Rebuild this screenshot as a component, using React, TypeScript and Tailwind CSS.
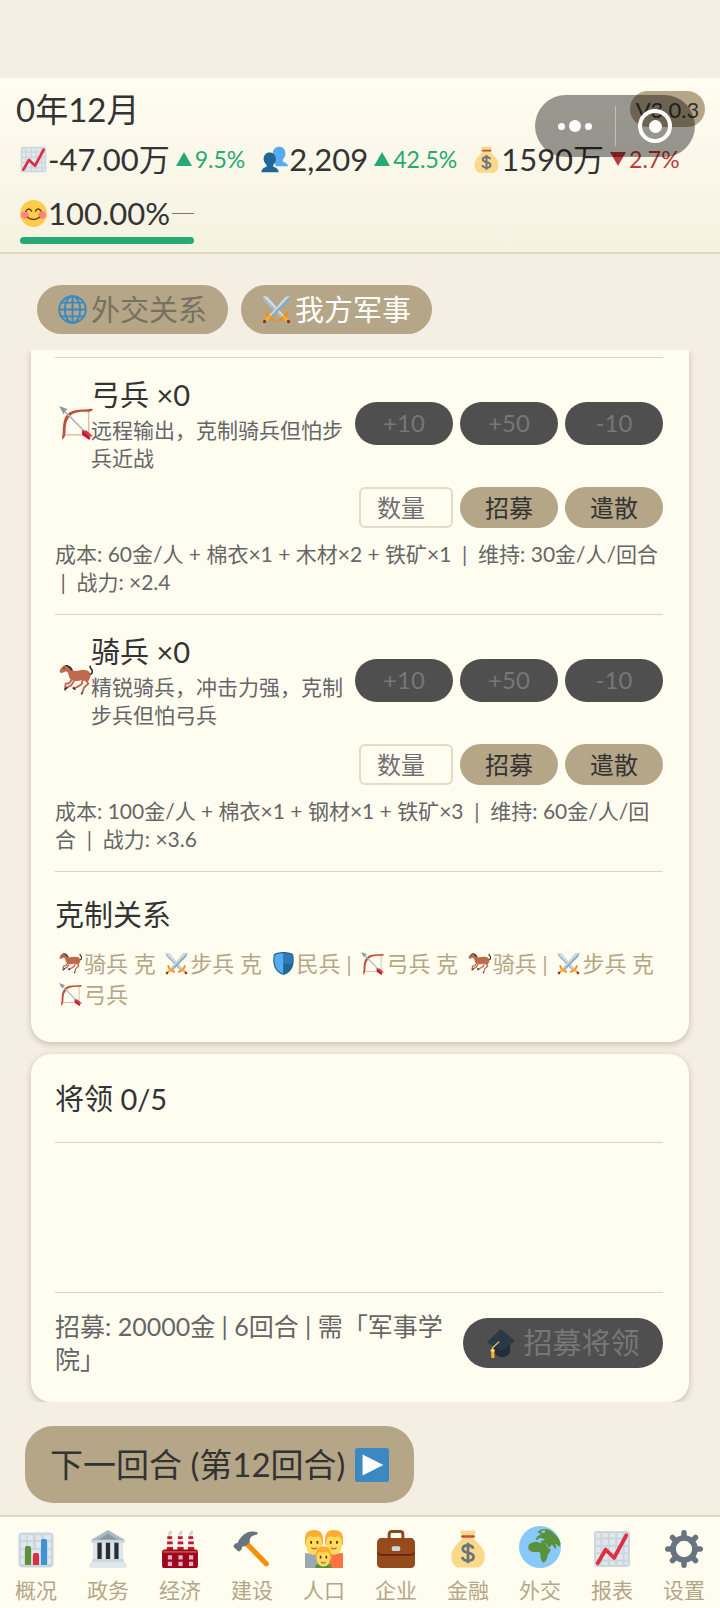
import type { ReactNode } from 'react'

interface IconProps {
  className?: string
}

function Svg({ className = '', children }: { className?: string; children: ReactNode }) {
  return (
    <svg viewBox="0 0 36 36" className={`shrink-0 ${className}`} aria-hidden="true">
      {children}
    </svg>
  )
}

function ChartUp({ className }: IconProps) {
  return (
    <Svg className={className}>
      <rect x="1" y="1" width="34" height="34" rx="3" fill="#ccd6dd" />
      <path
        fill="#e1e8ed"
        d="M3 3h4v4H3zM9 3h5v4H9zM16 3h5v4h-5zM23 3h5v4h-5zM30 3h3v4h-3zM3 9h4v5H3zM9 9h5v5H9zM16 9h5v5h-5zM23 9h5v5h-5zM30 9h3v5h-3zM3 16h4v5H3zM9 16h5v5H9zM16 16h5v5h-5zM23 16h5v5h-5zM30 16h3v5h-3zM3 23h4v5H3zM9 23h5v5H9zM16 23h5v5h-5zM23 23h5v5h-5zM30 23h3v5h-3zM3 30h4v3H3zM9 30h5v3H9zM16 30h5v3h-5zM23 30h5v3h-5zM30 30h3v3h-3z"
      />
      <path
        fill="none"
        stroke="#dd2e44"
        strokeWidth="3.6"
        strokeLinecap="round"
        strokeLinejoin="round"
        d="M4.500 31.500 12 18.500l8 8L31.500 5"
      />
    </Svg>
  )
}

function BarChart({ className }: IconProps) {
  return (
    <Svg className={className}>
      <rect x="0.500" y="0.500" width="35" height="35" rx="4" fill="#ccd6dd" />
      <path
        fill="#e1e8ed"
        d="M3 3h5v5H3zM10 3h5v5h-5zM18 3h5v5h-5zM26 3h7v5h-7zM3 10h5v6H3zM10 10h5v6h-5zM18 10h5v6h-5zM30 10h3v6h-3zM3 18h3v6H3zM14 18h8v6h-8zM30 18h3v6h-3zM3 26h3v6H3zM30 26h3v6h-3z"
      />
      <path fill="#5c913b" d="M7 15.500a1.500 1.500 0 0 1 1.500-1.500h3a1.500 1.500 0 0 1 1.500 1.500V33H7z" />
      <path fill="#dd2e44" d="M15 22.500a1.500 1.500 0 0 1 1.500-1.500h3a1.500 1.500 0 0 1 1.500 1.500V33h-6z" />
      <path fill="#3b94d9" d="M23 8.500A1.500 1.500 0 0 1 24.500 7h3A1.500 1.500 0 0 1 29 8.500V33h-6z" />
    </Svg>
  )
}

function People({ className }: IconProps) {
  return (
    <Svg className={className}>
      <path
        fill="#55acee"
        d="M24.500 1c4.600 0 8 3.600 8 8.500 0 3.500-1.300 6.500-3.500 8.500v3c3.500.8 6.500 2.500 7 6H20l-4-11c0-1.500-.3-4-.3-6C15.700 4.600 19.500 1 24.500 1z"
      />
      <path
        fill="#226699"
        d="M11.500 8.500c4.700 0 8.300 3.500 8.300 8.500 0 3.600-1.300 6.500-3.600 8.400v2.200c3.800.9 7 2.700 7.300 7.400H.5c.3-4.700 3.300-6.500 7-7.400v-2.200C5.200 23.500 3.500 20.500 3.500 17c0-5 3.400-8.500 8-8.500z"
      />
    </Svg>
  )
}

function MoneyBag({ className }: IconProps) {
  return (
    <Svg className={className}>
      <path fill="#fdd888" d="M11 1.500C11 .5 12 0 13 .5c2 .8 3 0 5 0s3 .8 5 0c1-.5 2 0 2 1 0 2-1 3.500-2 5.500H13c-1-2-2-3.500-2-5.500z" />
      <path
        fill="#fdd888"
        d="M13 7h10c1 3 7 6.500 9.500 12 2.800 6 1.500 13-4 16.500H7.500C2 32 .7 25 3.500 19 6 13.500 12 10 13 7z"
      />
      <rect x="11.500" y="5" width="13" height="2.400" rx="1.200" fill="#be4f3b" />
      <path
        fill="none"
        stroke="#67757f"
        strokeWidth="2.600"
        d="M23 17.600c-.6-2-2.500-3.100-5-3.100-2.800 0-5 1.300-5 3.600 0 5 10.300 2.200 10.300 7.200 0 2.400-2.300 3.700-5.300 3.700-2.800 0-5-1.200-5.500-3.500M18 12v19.500"
      />
    </Svg>
  )
}

function Smile({ className }: IconProps) {
  return (
    <Svg className={className}>
      <circle cx="18" cy="18" r="18" fill="#ffcc4d" />
      <circle cx="6.500" cy="20" r="5" fill="#ff7892" opacity="0.900" />
      <circle cx="29.500" cy="20" r="5" fill="#ff7892" opacity="0.900" />
      <path
        fill="none"
        stroke="#664500"
        strokeWidth="1.800"
        strokeLinecap="round"
        d="M8 15c1.500-4 6-4 7.500 0M20.500 15c1.500-4 6-4 7.500 0M10 23c4 4 12 4 16 0"
      />
    </Svg>
  )
}

function Globe({ className }: IconProps) {
  return (
    <Svg className={className}>
      <g fill="none" stroke="#3b88c3" strokeWidth="2.400">
        <circle cx="18" cy="18" r="16.500" />
        <ellipse cx="18" cy="18" rx="9.500" ry="16.500" />
        <path d="M18 1.500v33M1.500 18h33M4.500 9.500h27M4.500 26.500h27" />
      </g>
    </Svg>
  )
}

function Swords({ className }: IconProps) {
  return (
    <Svg className={className}>
      <path fill="#a9bdc9" d="M1 1l6 1.500L27 25l-3.500 3.500L2.500 7z" />
      <path fill="#d3dfe6" d="M1 1l6 1.500L27 25l-1.500 1.500z" />
      <path fill="#8ca9bb" d="M35 1l-6 1.500L9 25l3.500 3.500L33.500 7z" />
      <path fill="#ccd9e1" d="M35 1l-6 1.500L9 25l1.500 1.500z" />
      <g strokeLinecap="round" fill="none">
        <path stroke="#f4900c" strokeWidth="3" d="M5 22c1.500 4 5 7.500 9.500 9M31 22c-1.500 4-5 7.500-9.500 9" />
        <path stroke="#ffac33" strokeWidth="3.400" d="M9 27l-5 5M27 27l5 5" />
        <path stroke="#992b1f" strokeWidth="3.800" d="M3 33l.3-.3M33 33l-.3-.3" />
      </g>
    </Svg>
  )
}

function Bow({ className }: IconProps) {
  return (
    <Svg className={className}>
      <path fill="none" stroke="#dcb49a" strokeWidth="1.300" d="M4 30.500h27.500V4.500" />
      <path
        fill="#be4f3b"
        d="M3.500 35.500c-.7-2 .4-4 .5-8C4.200 17 5.500 12.500 9 8.500 13 4.500 19 3.600 28 3.600c4 0 5-.8 7.500-.6.3 1.800-.5 2.700-3.500 3-3 .2-5-.1-8 .1-5.500.4-9.300 1.400-12 4.300-3.500 3.600-4.800 8.600-5 13.600-.2 4 .3 9-3.500 11.500z"
      />
      <path stroke="#aab8c2" strokeWidth="1.800" d="M4 3.500 31 31" />
      <path fill="#8899a6" d="M0 0l9.500 3.500-3 1.500-1.500 4z" />
      <path fill="#dd2e44" d="M24 26h5l7 6-4 .5zM25 26v5l7 5 .5-3.500z" />
      <path fill="#be1931" d="M24.500 25.500l9 8.500-1 1.500-8-5z" />
    </Svg>
  )
}

function Horse({ className }: IconProps) {
  return (
    <Svg className={className}>
      <path
        fill="none"
        stroke="#292f33"
        strokeWidth="1.800"
        strokeLinecap="round"
        d="M32.500 12c3 0 3.500-3.500 2-5.500-1-1-1.800-1.500-1.500-3"
      />
      <g fill="none" stroke="#c1694f" strokeWidth="2" strokeLinejoin="round">
        <path d="M14 17l-3.500 4.500-3.500.5L6.500 27" />
        <path d="M16 19l-3.500 5-3.500 1.500" />
        <path d="M28 17l3 5-4.500 4-2 5.500" />
        <path d="M25 18l-1 4.500-5 3-3.500 1" />
      </g>
      <path
        fill="none"
        stroke="#292f33"
        strokeWidth="1.800"
        strokeLinecap="round"
        d="M6.500 27.500v.8M8.500 26l-.5.800M24.500 32l-.5.500M15 26.500l1.800 1.200"
      />
      <path
        fill="#c1694f"
        d="M.8 8.500C2 5.500 4 2.500 7 2.500c3.500 0 5 3.500 7.500 5.500 3.500 1 7.500-.5 11.500-.5 4.500 0 7 2 7.500 5 0 3-1.500 6-3.500 7.500l-5.500-2c-3.500 1.200-7 1.700-10 .5-4-1.500-4-5-5-8C8.500 9 7.500 8.800 6 9.200L3 10.500C1.500 10.800.5 9.500.8 8.500z"
      />
      <path fill="#292f33" d="M5.500 2.500C9 .8 13.500 3.500 15 8h-2C11 5.500 9 3.300 5.500 2.500z" />
      <circle cx="5.400" cy="5.500" r="0.700" fill="#292f33" />
    </Svg>
  )
}

function Shield({ className }: IconProps) {
  return (
    <Svg className={className}>
      <path fill="#226699" d="M33 3c-7-3-15-3-15-3S10 0 3 3C0 18 3 31 18 36 33 31 36 18 33 3z" />
      <path fill="#55acee" d="M18 2S10.500 2 4.500 4.500C2.500 18 5 29 18 34z" />
      <path fill="#2e7bb5" d="M18 2s7.500 0 13.500 2.500C33.500 18 31 29 18 34z" />
      <path fill="#226699" d="M18 18h14c-1 8-5 13.500-14 16z" />
    </Svg>
  )
}

function GradCap({ className }: IconProps) {
  return (
    <Svg className={className}>
      <path fill="#222e38" d="M9 19l11 7 10-9v12c-2 4-7 7-11 6-4-.8-8-3.500-10-7z" />
      <path fill="#2a3947" d="M1 16.500 17.500 1c.6-.5 1.500-.5 2 0L36 14.500 19.500 27.500z" />
      <path fill="none" stroke="#ffcc4d" strokeWidth="1.500" strokeLinecap="round" d="M16 16l-7.500 7v3" />
      <circle cx="8.300" cy="27" r="2.600" fill="#ffd983" />
      <path fill="#ffac33" d="M6.500 28h4v8h-4z" />
    </Svg>
  )
}

function Play({ className }: IconProps) {
  return (
    <Svg className={className}>
      <rect width="36" height="36" rx="3" fill="#3b88c3" />
      <path fill="#fff" d="M8 7l22 11L8 29z" />
    </Svg>
  )
}

function Bank({ className }: IconProps) {
  return (
    <Svg className={className}>
      <path fill="#292f33" d="M6 11h24v18H6z" />
      <path fill="#ccd6dd" d="M4 10h4v19H4zM12 10h4v19h-4zM20 10h4v19h-4zM28 10h4v19h-4z" />
      <path fill="#e1e8ed" d="M4.500 10h3v19h-3zM12.800 10h2.500v19h-2.500zM20.800 10h2.500v19h-2.500zM28.500 10h3v19h-3z" />
      <path fill="#aab8c2" d="M18 0l16 9.500V11H2V9.500z" />
      <path fill="#8899a6" d="M18 3.500 27 9H9z" />
      <path fill="#ccd6dd" d="M2 9.500h32V12H2zM3 27.500h30V31H3z" />
      <path fill="#e1e8ed" d="M0 33.500C0 32 1 30.500 3 30.500h30c2 0 3 1.500 3 3 0 1.600-1 2.500-2 2.500H2c-1 0-2-.9-2-2.500z" />
    </Svg>
  )
}

function Factory({ className }: IconProps) {
  return (
    <Svg className={className}>
      <g fill="none" stroke="#ccd6dd" strokeWidth="3" strokeLinecap="round">
        <path d="M8 4 9 2M18 4 19 2M28 4 29 2" />
      </g>
      <path fill="#f5e4e4" d="M6 5h4.500l1 14h-6zM16 5h4.500l1 14h-6zM26 5h4.500l1 14h-6z" />
      <path
        fill="#be1931"
        d="M6 6h4.500v2.500H6zM16 6h4.500v2.500H16zM26 6h4.500v2.500H26zM5.800 11h5.300v2.500H5.800zM15.800 11h5.300v2.500h-5.300zM25.800 11h5.300v2.500h-5.300zM5.500 16h6v3h-6zM15.500 16h6v3h-6zM25.500 16h6v3h-6z"
      />
      <path fill="#a0041e" d="M1 21c0-1.500 1-2.500 2-2.500h30c1 0 2 1 2 2.500v13c0 1-1 2-2 2H3c-1 0-2-1-2-2z" />
      <path fill="#be4f3b" d="M2 20h32v1.500H2z" />
      <path
        fill="#d4b5bd"
        d="M6.500 24h4v4h-4zM16.500 24h4v4h-4zM26.500 24h4v4h-4zM6.500 30h4v4h-4zM16.500 30h4v4h-4zM26.500 30h4v4h-4z"
      />
    </Svg>
  )
}

function Hammer({ className }: IconProps) {
  return (
    <Svg className={className}>
      <path stroke="#f4900c" strokeWidth="5" strokeLinecap="round" d="M14 14 31.500 32" />
      <path
        fill="#66757f"
        d="M22.500 2C16 .5 12.500 2 9 5.500L5.500 9.500c-.4.800-.2 1.800-1 2.600-.8.800-1.800.4-2.600 1L.8 14.400c-.6.700-.5 1.400 0 2l3.800 3.500c.7.600 1.500.500 2 0l1.500-1.700c.5-.8.200-1.700.8-2.400.5-.6 1.500-.4 2.200-.2L16 11.500c-.6-2.800.5-6 6-7 1.500-.2 1.800-2.100.5-2.500z"
      />
    </Svg>
  )
}

function Family({ className }: IconProps) {
  return (
    <Svg className={className}>
      <path fill="#9aaab4" d="M0 36V22h18v14z" />
      <path fill="#ff7043" d="M18 36V22h18v14z" />
      <path fill="#ffac33" d="M0 9c0-6 3-9 8.500-9S17 3 17 9v5H0z" />
      <path fill="#ffac33" d="M19 9c0-6 3-9 8.500-9S36 3 36 9v5H19z" />
      <path fill="#ffdc5d" d="M1 14c0-6 1.500-7.500 4-8 2 1 5.500 1 7.500 0C15 7 16 9 16 14c0 6-3 9.500-7.500 9.500S1 20 1 14z" />
      <path fill="#ffdc5d" d="M20 14c0-6 1.500-7.500 4-8 2 1 5.500 1 7.500 0C34 7 35 9 35 14c0 6-3 9.500-7.500 9.500S20 20 20 14z" />
      <path fill="#662113" d="M5 10.500h1.600V13H5zM11 10.500h1.600V13H11zM23.500 10.500h1.600V13h-1.600zM29.500 10.500h1.600V13h-1.600z" />
      <path
        fill="none"
        stroke="#c1694f"
        strokeWidth="1.200"
        strokeLinecap="round"
        d="M6.500 17c1.500 1 3 1 4.500 0M25 17c1.500 1 3 1 4.500 0"
      />
      <path fill="#5c913b" d="M9.500 36c0-3.500 3-5 8-5s8 1.500 8 5z" />
      <path fill="#ffac33" d="M10 25c0-6 3-9.500 7.500-9.500S25 19 25 25v3H10z" />
      <path fill="#ffdc5d" d="M11 26c0-3 1.500-4.500 3-5.500 2 1 5 1 7 0 1.500 1 3 2.500 3 5.500 0 5.500-3 8.500-6.500 8.500S11 31.500 11 26z" />
      <path fill="#662113" d="M14 24.500h1.500V27H14zM19.500 24.500H21V27h-1.500z" />
      <path fill="none" stroke="#c1694f" strokeWidth="1.200" strokeLinecap="round" d="M15.500 30.500c1.300 1 2.700 1 4 0" />
    </Svg>
  )
}

function Briefcase({ className }: IconProps) {
  return (
    <Svg className={className}>
      <path fill="none" stroke="#8a4b23" strokeWidth="2.800" d="M11.500 9V4c0-1.500 1-2.500 2.500-2.500h8c1.500 0 2.500 1 2.500 2.500v5" />
      <path fill="#974b1c" d="M0 12c0-2.500 1.500-4.500 4-4.500h28c2.500 0 4 2 4 4.500v20c0 2.500-1.500 4-4 4H4c-2.500 0-4-1.500-4-4z" />
      <path fill="#662113" d="M0 20c1 2 2.500 2.800 4 2.800h28c1.500 0 3-.8 4-2.800v1.500c-.8 2-2.500 2.800-4 2.800H4c-1.500 0-3.200-.8-4-2.800z" />
      <rect x="14" y="15.500" width="8" height="4.500" rx="1.500" fill="#ccd6dd" />
    </Svg>
  )
}

function Earth({ className }: IconProps) {
  return (
    <Svg className={className}>
      <circle cx="18" cy="18" r="18" fill="#88c9f9" />
      <path
        fill="#5c913b"
        d="M9 15.500c2-1 3.500-2 6-2 1.500 0 2.500 1.500 4.500 1 1.500-.3 3 .2 4 1.500.8 1.500 1.500 3.500 3.500 4 .5 2-2 3.500-2.500 5.500-.5 2.500-1.500 5-3.500 6-1.500-.5-2-2.500-2.500-4.500-.3-1.500.2-3-.7-4.300-1.800-.8-4.300 0-6.800-.7C8.500 21 7.500 19.500 8 18c.2-1 .2-2 1-2.500z"
      />
      <path
        fill="#5c913b"
        d="M16 5c1.500-1.500 3.500-2.500 6-2.500 1.500 0 2.500.5 4 .8 4.500 3 8 6.200 9.500 11.200.2 2-.5 3.500-1.500 3-1-.8-2-2-3-2 .5 1.500 1.500 2.500.5 4-1.500-.5-2-3-3.500-3.500-1 .8-1 2.500-2.300 2.700-1.500-1.200-1.200-3-2.700-3.700-1.500-.5-3.500 0-4.500-1.500.5-1.500 3-.5 3.500-2-1-1.500-3-.5-4.200-1.500-1 .5-1.500 2-3.300 2-.5-1.500 1-2.500 1.500-3.500C17 8 17.500 7.500 19 7c-1-.5-2.500-.8-3-2z"
      />
      <path fill="#88c9f9" d="M19 4.500l3-1 .5 1.800-2.500 1z" />
    </Svg>
  )
}

function Gear({ className }: IconProps) {
  return (
    <Svg className={className}>
      <g stroke="#66757f" strokeWidth="5.200" strokeLinecap="round">
        <path d="M18 2.600v5M18 28.400v5M2.600 18h5M28.400 18h5M7.100 7.100l3.500 3.500M25.400 25.400l3.500 3.500M7.100 28.900l3.500-3.500M25.400 10.600l3.500-3.500" />
      </g>
      <circle cx="18" cy="18" r="10.400" fill="none" stroke="#66757f" strokeWidth="5.400" />
    </Svg>
  )
}

const units = [
  {
    name: '弓兵 ×0',
    Icon: Bow,
    desc: '远程输出，克制骑兵但怕步兵近战',
    info: '成本: 60金/人 + 棉衣×1 + 木材×2 + 铁矿×1 \u00a0|\u00a0 维持: 30金/人/回合 \u00a0|\u00a0 战力: ×2.4',
  },
  {
    name: '骑兵 ×0',
    Icon: Horse,
    desc: '精锐骑兵，冲击力强，克制步兵但怕弓兵',
    info: '成本: 100金/人 + 棉衣×1 + 钢材×1 + 铁矿×3 \u00a0|\u00a0 维持: 60金/人/回合 \u00a0|\u00a0 战力: ×3.6',
  },
]

const navItems = [
  { label: '概况', Icon: BarChart, size: 'size-9' },
  { label: '政务', Icon: Bank, size: 'size-[38px]' },
  { label: '经济', Icon: Factory, size: 'size-[38px]' },
  { label: '建设', Icon: Hammer, size: 'size-[38px]' },
  { label: '人口', Icon: Family, size: 'size-[38px]' },
  { label: '企业', Icon: Briefcase, size: 'size-[38px]' },
  { label: '金融', Icon: MoneyBag, size: 'size-[38px]' },
  { label: '外交', Icon: Earth, size: 'size-[42px]' },
  { label: '报表', Icon: ChartUp, size: 'size-[38px]' },
  { label: '设置', Icon: Gear, size: 'size-[38px]' },
]

function Change({ value, up }: { value: string; up?: boolean }) {
  return (
    <span className={`ml-[6px] flex items-center gap-[3px] text-[23px] ${up ? 'text-[#27a974]' : 'text-[#c0393b]'}`}>
      <svg viewBox="0 0 16 14" className="h-[14px] w-4" aria-hidden="true">
        <path fill="currentColor" d={up ? 'M8 0l8 14H0z' : 'M8 14l8-14H0z'} />
      </svg>
      {value}
    </span>
  )
}

function Stat({ Icon, value, children }: { Icon: (p: IconProps) => ReactNode; value: string; children: ReactNode }) {
  return (
    <div className="flex h-[54px] items-center">
      <Icon className="mr-px size-[27px]" />
      <span className="text-[31px]">{value}</span>
      {children}
    </div>
  )
}

function Header() {
  return (
    <header className="relative border-b-2 border-[#e0d6c2] bg-linear-to-b from-[#fffdf0] to-[#f5f2e2] px-4 pb-2">
      <h1 className="pt-2 text-[33px] leading-[46px]">0年12月</h1>
      <div className="flex flex-wrap gap-x-4 px-1">
        <Stat Icon={ChartUp} value="-47.00万">
          <Change value="9.5%" up />
        </Stat>
        <Stat Icon={People} value="2,209">
          <Change value="42.5%" up />
        </Stat>
        <Stat Icon={MoneyBag} value="1590万">
          <Change value="2.7%" />
        </Stat>
        <div>
          <Stat Icon={Smile} value="100.00%">
            <span className="ml-0.5 h-px w-[22px] bg-[#777]" />
          </Stat>
          <div className="-mt-[3px] h-[7px] rounded-full bg-[#27a974]" />
        </div>
      </div>
      <span className="absolute top-[13px] right-[15px] flex h-9 w-[75px] items-center justify-center rounded-full bg-[#b5a687] text-[22px]">
        V3.0.3
      </span>
      {/* Floating capsule of the host app */}
      <div className="absolute top-[17px] right-[25px] flex h-[62px] w-[160px] items-center rounded-full bg-black/40">
        <button type="button" aria-label="更多" className="flex h-full flex-1 items-center justify-center gap-1">
          <span className="size-[7px] rounded-full bg-white" />
          <span className="size-3 rounded-full bg-white" />
          <span className="size-[7px] rounded-full bg-white" />
        </button>
        <span className="h-10 w-px bg-white/40" />
        <button type="button" aria-label="关闭" className="flex h-full flex-1 items-center justify-center">
          <span className="flex size-[34px] items-center justify-center rounded-full border-4 border-white">
            <span className="size-[13px] rounded-full bg-white" />
          </span>
        </button>
      </div>
    </header>
  )
}

function Unit({ unit }: { unit: (typeof units)[number] }) {
  const { Icon } = unit
  return (
    <section className="border-b border-[#dcd3c0] pt-4 pb-[18px]">
      <div className="flex items-center">
        <div className="w-9 shrink-0 pl-1">
          <Icon className="size-[34px]" />
        </div>
        <div className="min-w-0 flex-1">
          <h3 className="text-[29px] leading-[42px]">{unit.name}</h3>
          <p className="text-[21px] leading-7 text-[#666]">{unit.desc}</p>
        </div>
        <div className="ml-2 flex gap-[7px]">
          {['+10', '+50', '-10'].map((step) => (
            <button
              key={step}
              type="button"
              disabled
              className="h-[43px] w-[98px] rounded-full bg-[#4f4f4f] text-2xl text-[#777]"
            >
              {step}
            </button>
          ))}
        </div>
      </div>
      <div className="mt-[15px] flex justify-end gap-[7px]">
        <input
          type="text"
          placeholder="数量"
          aria-label={`${unit.name} 数量`}
          className="h-[41px] w-[94px] rounded-md border-2 border-[#e4dac6] bg-transparent px-4 text-2xl placeholder:text-[#707070]"
        />
        <button type="button" className="h-[41px] w-[98px] rounded-full bg-[#b5a687] text-2xl">
          招募
        </button>
        <button type="button" className="h-[41px] w-[98px] rounded-full bg-[#b5a687] text-2xl">
          遣散
        </button>
      </div>
      <p className="mt-3 text-[21px] leading-7 text-[#666]">{unit.info}</p>
    </section>
  )
}

function Tag({ Icon, children }: { Icon: (p: IconProps) => ReactNode; children: ReactNode }) {
  return (
    <span className="whitespace-nowrap">
      <Icon className="mr-0.5 ml-1 inline-block size-[23px] align-[-3px]" />
      {children}
    </span>
  )
}

export default function App() {
  return (
    <div className="flex min-h-screen flex-col bg-[#f5eee2] pt-[78px] font-[Lato,'Noto_Sans_CJK_SC',sans-serif] text-[#333]">
      <Header />

      <div className="flex gap-[13px] px-[37px] pt-[31px] pb-4">
        <button
          type="button"
          className="flex h-[49px] items-center gap-1 rounded-full bg-[#b5a687] px-[21px] text-[29px] text-[#777161]"
        >
          <Globe className="size-[29px]" />
          外交关系
        </button>
        <button
          type="button"
          className="flex h-[49px] items-center gap-1 rounded-full bg-[#b5a687] px-[21px] text-[29px] text-white"
        >
          <Swords className="size-[29px]" />
          我方军事
        </button>
      </div>

      <main className="flex flex-col gap-3 overflow-hidden px-[31px]">
        <div className="rounded-b-[20px] bg-[#fffdf0] pt-[7px] pr-[26px] pb-8 pl-6 shadow-[0_2px_6px_rgba(90,80,50,0.3)]">
          <div className="border-t border-[#dcd3c0]">
            {units.map((unit) => (
              <Unit key={unit.name} unit={unit} />
            ))}
          </div>
          <h2 className="mt-[22px] text-[29px] leading-[42px]">克制关系</h2>
          <p className="mt-3 text-[22px] leading-[31px] text-[#b5a687]">
            <Tag Icon={Horse}>骑兵</Tag> 克 <Tag Icon={Swords}>步兵</Tag> 克 <Tag Icon={Shield}>民兵</Tag> |{' '}
            <Tag Icon={Bow}>弓兵</Tag> 克 <Tag Icon={Horse}>骑兵</Tag> | <Tag Icon={Swords}>步兵</Tag> 克{' '}
            <Tag Icon={Bow}>弓兵</Tag>
          </p>
        </div>

        <div className="rounded-[20px] bg-[#fffdf0] pt-6 pr-[26px] pb-[26px] pl-6 shadow-[0_2px_6px_rgba(90,80,50,0.3)]">
          <h2 className="pb-[22px] text-[29px] leading-[42px]">将领 0/5</h2>
          <div className="h-[151px] border-y border-[#dcd3c0]" />
          <div className="flex items-center gap-3 pt-[17px]">
            <p className="flex-1 text-[25px] leading-[33px] text-[#666]">招募: 20000金 | 6回合 | 需「军事学院」</p>
            <button
              type="button"
              disabled
              className="flex h-[50px] w-[200px] items-center justify-center gap-2 rounded-full bg-[#4f4f4f] text-[29px] text-[#777]"
            >
              <GradCap className="size-[29px]" />
              招募将领
            </button>
          </div>
        </div>
      </main>

      <div className="px-[25px] pt-6 pb-3">
        <button
          type="button"
          className="flex h-[77px] items-center gap-[10px] rounded-[28px] bg-[#b5a687] px-[25px] text-[33px]"
        >
          下一回合 (第12回合)
          <Play className="size-[34px]" />
        </button>
      </div>

      <nav className="mt-auto flex h-[93px] border-t-2 border-[#e0d6c2] bg-[#fffdf0]">
        {navItems.map(({ label, Icon, size }) => (
          <a
            key={label}
            href="#"
            className="flex flex-1 flex-col items-center gap-2 text-[21px] leading-7 text-[#b5a687]"
          >
            <span className="flex h-[51px] items-end">
              <Icon className={size} />
            </span>
            {label}
          </a>
        ))}
      </nav>
    </div>
  )
}
